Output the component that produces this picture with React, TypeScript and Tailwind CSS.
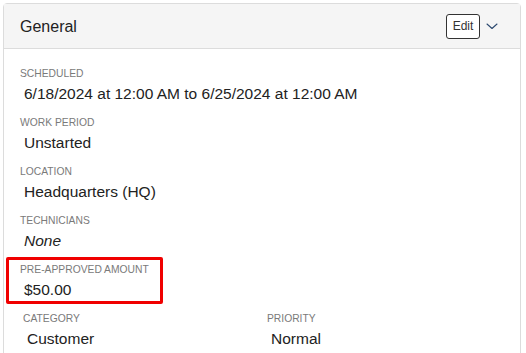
import React from 'react';

type FieldProps = {
  label: string;
  value: string;
  italic?: boolean;
};

function Field({ label, value, italic }: FieldProps) {
  return (
    <div className="mb-[11px]">
      <div className="pt-[1px] text-[10.3px] leading-[14px] uppercase text-[#7a7a7a]">{label}</div>
      <div className={`mt-[3px] pl-[4px] text-[15.5px] leading-[20px] text-[#222] ${italic ? 'italic' : ''}`}>
        {value}
      </div>
    </div>
  );
}

export default function App() {
  return (
    <div className="min-h-[353px] bg-white pl-[3px] pt-[3px] font-['Liberation_Sans',Arial,sans-serif]">
      <div className="w-[518px] rounded-t-[4px] border border-[#dcdcdc] bg-white">
        {/* Header */}
        <div className="flex h-[45px] items-center justify-between border-b border-[#dcdcdc] bg-[#f5f5f5] pl-[16px] pr-[22px]">
          <h2 className="mt-[2px] text-[16px] leading-[20px] text-[#222]">General</h2>
          <div className="flex items-center gap-[6px]">
            <button className="flex h-[25px] w-[34px] items-center justify-center rounded-[3px] border border-[#333] bg-white text-[12px] text-[#333]">
              Edit
            </button>
            <svg width="12" height="12" viewBox="0 0 12 12" fill="none" stroke="#2d4a70" strokeWidth="1.1" strokeLinecap="round" strokeLinejoin="round">
              <path d="M1 4l5 4.5 5-4.5" />
            </svg>
          </div>
        </div>

        {/* Body */}
        <div className="pl-[16px] pt-[17px]">
          <Field label="Scheduled" value="6/18/2024 at 12:00 AM to 6/25/2024 at 12:00 AM" />
          <Field label="Work Period" value="Unstarted" />
          <Field label="Location" value="Headquarters (HQ)" />
          <Field label="Technicians" value="None" italic />

          {/* highlighted field */}
          <div className="relative">
            <div className="absolute -left-[14px] -top-[5px] h-[47px] w-[157px] rounded-[2px] border-[3px] border-[#f00000]" />
            <Field label="Pre-Approved Amount" value="$50.00" />
          </div>

          <div className="grid grid-cols-[244px_1fr] pl-[3px]">
            <Field label="Category" value="Customer" />
            <Field label="Priority" value="Normal" />
          </div>
        </div>
      </div>
    </div>
  );
}
